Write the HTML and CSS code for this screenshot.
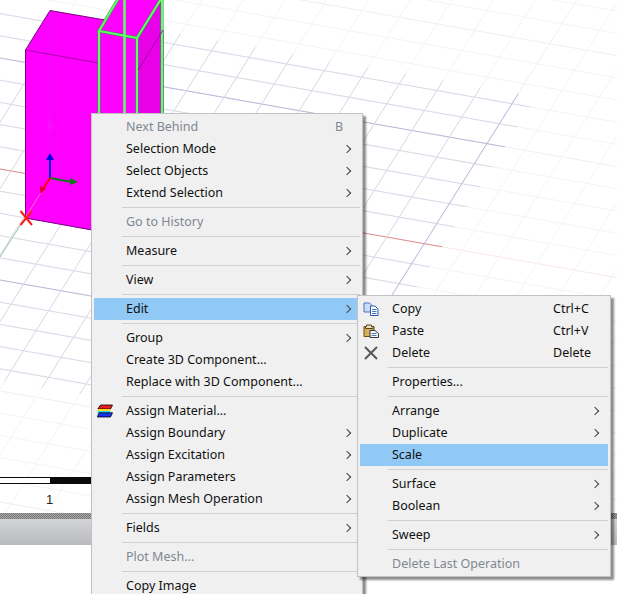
FILE: index.html
```html
<!DOCTYPE html>
<html lang="en">
<head>
    <meta charset="UTF-8">
    <title>3D Modeler - context menu</title>
    <link rel="stylesheet" href="styles.css">
</head>
<body>
    <div class="app">
        <div class="view">
            <svg class="scene" width="617" height="513" viewBox="0 0 617 513">
                <defs>
                    <clipPath id="brightArea"><polygon id="brightPoly" points="0,0"/></clipPath>
                </defs>
                <!-- grid lines are filled in by scene.js -->
                <g id="gridFaint" fill="none" stroke-width="1"></g>
                <g id="gridBright" fill="none" stroke-width="1" clip-path="url(#brightArea)"></g>

                <!-- big box -->
                <polygon class="face" points="50,10.5 25.5,50 25.5,218 163,243 163,30"/>
                <polygon class="face-dark" points="138,70 163,30 163,243 138,239"/>
                <line class="faint-edge" x1="50" y1="11" x2="50" y2="178"/>
                <polygon class="ghost" points="50,117 54,129 46,129"/>
                <polyline class="edge" points="163,120 163,30 50,10.5 25.5,50 25.5,218 92,230"/>
                <polyline class="edge-thin" points="25.5,50 138,70 163,30"/>

                <!-- selected box -->
                <polygon class="face" points="118,0 99,30 99,113 162,113 162,0"/>
                <polygon class="face-dark" points="137,38 161,0 162,0 162,113 137,113"/>
                <g class="sel-under">
                    <polyline points="118,-1 99,31 137,38 161,-1"/>
                    <line x1="99" y1="31" x2="99" y2="113"/>
                    <line x1="137" y1="38" x2="137" y2="113"/>
                    <line x1="162" y1="0" x2="162" y2="113"/>
                </g>
                <g class="sel-over">
                    <polyline points="118,-1 99,31 137,38 161,-1"/>
                    <line x1="99" y1="31" x2="99" y2="113"/>
                    <line x1="137" y1="38" x2="137" y2="113"/>
                    <line x1="162" y1="0" x2="162" y2="113"/>
                    <line class="sel-back" x1="124.5" y1="0" x2="124.5" y2="113"/>
                </g>
                <line class="edge-thin" x1="138" y1="70" x2="163" y2="30"/>

                <!-- axes triad -->
                <line x1="50" y1="178" x2="25" y2="218" stroke="#ff6fb0" stroke-width="1"/>
                <line x1="50" y1="178" x2="50" y2="158" stroke="#0000e6" stroke-width="2"/>
                <polygon points="50,153 54,160 46,160" fill="#0000e6"/>
                <line x1="50" y1="178" x2="72" y2="182" stroke="#0a7a1a" stroke-width="2"/>
                <polygon points="78,182 70,178 70,185" fill="#0a7a1a"/>
                <line x1="50" y1="178" x2="43" y2="189" stroke="#ff0000" stroke-width="2"/>
                <polygon points="40,193.500 40,186 46,189" fill="#e6002a"/>
                <path d="M20.500 211 L32 225 M32 211 L20.500 225" stroke="#ff1a1a" stroke-width="2" fill="none"/>
            </svg>
            <div class="scale-bar"><div class="scale-white"></div><div class="scale-black"></div></div>
            <div class="scale-label">1</div>
        </div>
        <div class="strip">
            <div class="strip-dots"></div>
            <div class="strip-bar"></div>
        </div>

        <div class="menu main-menu">
            <div class="item disabled"><span class="label">Next Behind</span><span class="key key-short">B</span></div>
            <div class="item"><span class="label">Selection Mode</span><i class="arrow"></i></div>
            <div class="item"><span class="label">Select Objects</span><i class="arrow"></i></div>
            <div class="item"><span class="label">Extend Selection</span><i class="arrow"></i></div>
            <div class="sep"></div>
            <div class="item disabled"><span class="label">Go to History</span></div>
            <div class="sep"></div>
            <div class="item"><span class="label">Measure</span><i class="arrow"></i></div>
            <div class="sep"></div>
            <div class="item"><span class="label">View</span><i class="arrow"></i></div>
            <div class="sep"></div>
            <div class="item active"><span class="label">Edit</span><i class="arrow"></i></div>
            <div class="sep"></div>
            <div class="item"><span class="label">Group</span><i class="arrow"></i></div>
            <div class="item"><span class="label">Create 3D Component...</span></div>
            <div class="item"><span class="label">Replace with 3D Component...</span></div>
            <div class="sep"></div>
            <div class="item">
                <svg class="icon" viewBox="0 0 16 14">
                    <polygon points="3.500,1 15.500,1 13.500,5 0.800,5" fill="#ee1c1c" stroke="#000" stroke-width="0.8"/>
                    <polygon points="1,5 14,5 13,7 0.600,7" fill="#f6d820"/>
                    <polygon points="0.600,7 13.400,7 13,9 0.400,9" fill="#20e0f0"/>
                    <polygon points="2,8.800 15.500,8.800 13.500,13 0.400,13" fill="#1434f0" stroke="#000" stroke-width="0.8"/>
                </svg>
                <span class="label">Assign Material...</span>
            </div>
            <div class="item"><span class="label">Assign Boundary</span><i class="arrow"></i></div>
            <div class="item"><span class="label">Assign Excitation</span><i class="arrow"></i></div>
            <div class="item"><span class="label">Assign Parameters</span><i class="arrow"></i></div>
            <div class="item"><span class="label">Assign Mesh Operation</span><i class="arrow"></i></div>
            <div class="sep"></div>
            <div class="item"><span class="label">Fields</span><i class="arrow"></i></div>
            <div class="sep"></div>
            <div class="item disabled"><span class="label">Plot Mesh...</span></div>
            <div class="sep"></div>
            <div class="item"><span class="label">Copy Image</span></div>
        </div>

        <div class="menu sub-menu">
            <div class="item">
                <svg class="icon" viewBox="0 0 16 14">
                    <path d="M1 1 H6.500 L9 3.500 V10 H1 Z" fill="#c9dcf6" stroke="#4a72c4"/>
                    <path d="M7.500 4 H12 L15 7 V13.500 H7.500 Z" fill="#fff" stroke="#2f58b4"/>
                    <path d="M9 7.500 H13.500 M9 9.500 H13.500 M9 11.500 H13.500" stroke="#3f78d0" fill="none"/>
                </svg>
                <span class="label">Copy</span><span class="key">Ctrl+C</span>
            </div>
            <div class="item">
                <svg class="icon" viewBox="0 0 16 14">
                    <path d="M1 2.500 H11 V12.500 H1 Z" fill="#d9ae58" stroke="#6e4a14"/>
                    <path d="M3.500 2.500 V1 H8.500 V2.500 H10 V4.500 H2.500 V2.500 Z" fill="#e9dcc0" stroke="#5a4520"/>
                    <path d="M7 6.500 H12 L15.500 9.500 V13.500 H7 Z" fill="#f4f6fa" stroke="#30384a"/>
                    <path d="M8.500 9.500 H13.500 M8.500 11.500 H13.500" stroke="#5a7aa8" fill="none"/>
                </svg>
                <span class="label">Paste</span><span class="key">Ctrl+V</span>
            </div>
            <div class="item">
                <svg class="icon" viewBox="0 0 16 14">
                    <path d="M2 1 L14 13 M14 1 L2 13" stroke="#585858" stroke-width="2" fill="none"/>
                </svg>
                <span class="label">Delete</span><span class="key">Delete</span>
            </div>
            <div class="sep"></div>
            <div class="item"><span class="label">Properties...</span></div>
            <div class="sep"></div>
            <div class="item"><span class="label">Arrange</span><i class="arrow"></i></div>
            <div class="item"><span class="label">Duplicate</span><i class="arrow"></i></div>
            <div class="item active"><span class="label">Scale</span></div>
            <div class="sep"></div>
            <div class="item"><span class="label">Surface</span><i class="arrow"></i></div>
            <div class="item"><span class="label">Boolean</span><i class="arrow"></i></div>
            <div class="sep"></div>
            <div class="item"><span class="label">Sweep</span><i class="arrow"></i></div>
            <div class="sep"></div>
            <div class="item disabled"><span class="label">Delete Last Operation</span></div>
        </div>
    </div>
    <script src="scene.js"></script>
</body>
</html>
```
FILE: styles.css
```css
html, body {
    margin: 0;
    padding: 0;
    overflow: hidden;
    background-color: white;
}
.app {
    position: relative;
    width: 617px;
    height: 594px;
    overflow: hidden;
    font-family: "Noto Sans", Arial, sans-serif;
    font-size: 12.5px;
    color: #111;
}
.view {
    position: relative;
    height: 513px;
}
.scene {
    position: absolute;
    left: 0;
    top: 0;
}
.face { fill: #ff00ff; }
.face-dark { fill: #e800e8; }
.faint-edge { stroke: #ee10f6; stroke-width: 1; }
.ghost { fill: #f410f8; }
.edge { fill: none; stroke: #7a0080; stroke-width: 1; }
.edge-thin { fill: none; stroke: #8c0090; stroke-width: 0.8; }
.sel-under { fill: none; stroke: #2a9a4a; stroke-width: 3; }
.sel-over { fill: none; stroke: #62ff62; stroke-width: 2; }
.sel-back { stroke-width: 2.6; }

.scale-bar {
    position: absolute;
    left: 0;
    top: 477px;
    width: 91px;
    height: 7px;
    display: flex;
}
.scale-white {
    width: 50px;
    box-sizing: border-box;
    background-color: white;
    border-top: 1px solid #0a0a0a;
    border-bottom: 1px solid #0a0a0a;
}
.scale-black {
    flex: 1;
    background-color: #0a0a0a;
}
.scale-label {
    position: absolute;
    left: 46px;
    top: 491px;
    font-family: "Liberation Sans", Arial, sans-serif;
    font-size: 13px;
    line-height: 18px;
    color: #222;
}
.strip {
    height: 32px;
}
.strip-dots {
    height: 6px;
    background: repeating-conic-gradient(#767676 0 25%, #a8a8a8 0 50%) 0 0 / 2px 2px;
}
.strip-bar {
    height: 26px;
    background: linear-gradient(#d2d4d8, #b8babc);
}

.menu {
    position: absolute;
    box-sizing: border-box;
    background-color: #f0f0f0;
    border: 1px solid #c2c2c2;
    padding: 2px 2px 1px;
    box-shadow: 3px 3px 2px rgba(0,0,0,0.45);
}
.main-menu {
    left: 91px;
    top: 113px;
    width: 272px;
}
.sub-menu {
    left: 357px;
    top: 295px;
    width: 254px;
}
.item {
    display: flex;
    align-items: center;
    height: 22px;
    padding-left: 32px;
    white-space: nowrap;
}
.item.active {
    background-color: #90c8f6;
}
.item.disabled {
    color: #808890;
}
.label {
    flex: none;
    margin-bottom: 2px;
}
.key {
    margin-left: auto;
    margin-bottom: 2px;
    width: 55px;
}
.key-short {
    width: 25px;
}
.arrow {
    margin-left: auto;
    margin-right: 10px;
    width: 5px;
    height: 5px;
    border-top: 1.3px solid #444;
    border-right: 1.3px solid #444;
    transform: rotate(45deg);
}
.sep {
    height: 1px;
    margin: 3px 0 3px 28px;
    background-color: #cfcfcf;
}
.icon {
    flex: none;
    width: 16px;
    height: 14px;
    margin-left: -29px;
    margin-right: 13px;
}
```
FILE: scene.js
```js
// perspective grid of the modeler view, origin of the axes is at (50,178)
const slopeA = 0.176;   // lines going right and down
const slopeB = 0.627;   // lines going up and right (x + slopeB * y = const)
const rowStep = 22.2;
const colStep = 41.7;
const ns = 'http://www.w3.org/2000/svg';

function rowY(k, x) {
    return 169 + rowStep * k + slopeA * x;
}

function addLine(group, x1, y1, x2, y2, color) {
    const line = document.createElementNS(ns, 'line');
    line.setAttribute('x1', x1);
    line.setAttribute('y1', y1);
    line.setAttribute('x2', x2);
    line.setAttribute('y2', y2);
    line.setAttribute('stroke', color);
    group.appendChild(line);
}

function drawGrid(group, rowColor, majorColor, colColor, redColor) {
    for (let k = -30; k <= 20; k++) {
        let color = rowColor;
        if (k === 0) color = redColor;
        else if (k % 5 === 0) color = majorColor;
        addLine(group, 0, rowY(k, 0), 617, rowY(k, 617), color);
    }
    for (let m = -12; m <= 14; m++) {
        const c = 577 + colStep * m;
        const color = m === 0 ? majorColor : colColor;
        addLine(group, c, 0, c - slopeB * 513, 513, color);
    }
}

function corner(k, s) {
    const x = (s - slopeB * (169 + rowStep * k)) / (1 + slopeB * slopeA);
    return x + ',' + rowY(k, x);
}

drawGrid(document.getElementById('gridFaint'), '#f4f2f6', '#f0eef4', '#f4f3f7', '#f9e8ec');
drawGrid(document.getElementById('gridBright'), '#dcd8e8', '#bcb6d8', '#dcd8e8', '#e08c8c');
document.getElementById('brightPoly').setAttribute('points',
    [corner(-7.5, 597), corner(9.5, 597), corner(9.5, -400), corner(-7.5, -400)].join(' '));

// green axis runs down from the origin, in front of the grid
addLine(document.getElementById('gridBright'), 25, 218, 0, 257, '#9cc49c');
```
